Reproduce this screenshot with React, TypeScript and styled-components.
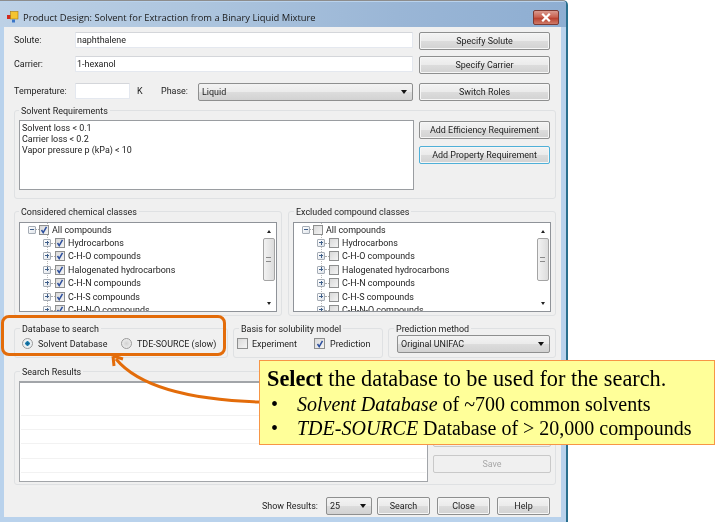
import React from "react";
import styled, { createGlobalStyle } from "styled-components";

const Global = createGlobalStyle`
  html, body { margin: 0; padding: 0; background: #fff; }
  #root { width: 715px; height: 522px; overflow: hidden; }
`;

const Page = styled.div`
  position: relative;
  width: 715px;
  height: 522px;
  overflow: hidden;
  background: #fff;
  font-family: Roboto, "Liberation Sans", Arial, sans-serif;
  font-size: 8.95px;
  color: #1c1c1c;
  filter: blur(0.35px);
`;

const Win = styled.div`
  width: 568px;
  height: 522px;
  box-sizing: border-box;
  padding-top: 1px;
  background: #b9d2ec;
  border-top: 1px solid #8d8d8d;
  border-right: 2px solid #2a6f8e;
  border-top-right-radius: 5px;
`;

const TitleBar = styled.div`
  height: 25px;
  box-sizing: border-box;
  display: flex;
  align-items: center;
  padding: 5px 7px 0 7px;
  background: linear-gradient(90deg, #bdd1e6 0%, #adc5de 35%, #9ab6d6 70%, #8eaed2 100%);
`;

const TitleText = styled.div`
  margin-left: 4px;
  font-family: "Open Sans", sans-serif;
  font-size: 9.4px;
  color: #1a1a1a;
  flex: 1;
`;

const CloseBtn = styled.div`
  width: 26px;
  height: 15px;
  box-sizing: border-box;
  border: 1px solid #7d3a33;
  border-radius: 2px;
  display: flex;
  align-items: center;
  justify-content: center;
  background: linear-gradient(180deg, #d99a8f 0%, #c9604f 48%, #b8402f 55%, #cf7a68 100%);
`;

const Client = styled.div`
  width: 557px;
  height: 490px;
  margin-left: 4px;
  box-sizing: border-box;
  padding: 5px 5px 0 10px;
  background: #f0f0f0;
  display: flex;
  flex-direction: column;
`;

const FieldRow = styled.div<{ $top: number }>`
  display: flex;
  align-items: flex-start;
  height: 18px;
  margin-top: ${(p) => p.$top}px;
`;

const FieldLabel = styled.div<{ $w: number; $pad?: number }>`
  width: ${(p) => p.$w}px;
  box-sizing: border-box;
  padding-left: ${(p) => p.$pad ?? 0}px;
  flex: none;
  line-height: 17px;
`;

const TextBox = styled.div<{ $w: number }>`
  width: ${(p) => p.$w}px;
  height: 16px;
  box-sizing: border-box;
  flex: none;
  padding-left: 1px;
  background: #fff;
  border: 1px solid #e4e8ef;
  border-top-color: #d4d6da;
  border-radius: 1px;
  line-height: 14px;
`;

const Btn = styled.div<{ $w?: number; $h?: number; $focus?: boolean; $off?: boolean }>`
  width: ${(p) => p.$w ?? 131}px;
  height: ${(p) => p.$h ?? 18}px;
  box-sizing: border-box;
  flex: none;
  display: flex;
  align-items: center;
  justify-content: center;
  padding-bottom: 1px;
  border: 1px solid ${(p) => (p.$focus ? "#4fb0d8" : p.$off ? "#c9c9c9" : "#8e8f8f")};
  border-radius: 2px;
  color: ${(p) => (p.$off ? "#a8a8a8" : "#1c1c1c")};
  background: ${(p) =>
    p.$off ? "#f0f0f0" : "linear-gradient(180deg, #f3f3f3 0%, #ebebeb 48%, #dcdcdc 52%, #d2d2d2 100%)"};
  box-shadow: inset 0 0 0 1px ${(p) => (p.$off ? "transparent" : "#f6f6f6")};
`;

const ButtonSlot = styled.div`
  margin-left: 6px;
`;

const Combo = styled.div<{ $w: number }>`
  width: ${(p) => p.$w}px;
  height: 18px;
  box-sizing: border-box;
  flex: none;
  display: flex;
  align-items: center;
  justify-content: space-between;
  padding: 0 5px 0 3px;
  border: 1px solid #8e8f8f;
  border-radius: 2px;
  background: linear-gradient(180deg, #f3f3f3 0%, #ebebeb 48%, #dcdcdc 52%, #d2d2d2 100%);
`;

const ComboArrow = styled.div`
  width: 0;
  height: 0;
  border-left: 3.5px solid transparent;
  border-right: 3.5px solid transparent;
  border-top: 4px solid #111;
`;

const Group = styled.div<{ $top?: number; $h: number; $w?: number; $left?: number }>`
  margin-top: ${(p) => p.$top ?? 0}px;
  margin-left: ${(p) => p.$left ?? 0}px;
  height: ${(p) => p.$h}px;
  width: ${(p) => (p.$w ? `${p.$w}px` : "auto")};
  box-sizing: border-box;
  flex: none;
  border: 1px solid #dfe1e3;
  border-radius: 3px;
`;

const Legend = styled.div<{ $left?: number }>`
  width: fit-content;
  height: 12px;
  margin: -6px 0 0 ${(p) => p.$left ?? 5}px;
  padding: 0 2px;
  line-height: 12px;
  background: #f0f0f0;
`;

const ReqBody = styled.div`
  display: flex;
  margin: 3px 0 0 4px;
`;

const ReqList = styled.div`
  width: 395px;
  height: 70px;
  box-sizing: border-box;
  flex: none;
  padding: 2px 2px;
  background: #fff;
  border: 1px solid #9a9da1;
  line-height: 11px;
`;

const ReqButtons = styled.div`
  margin-left: 5px;
  padding-top: 1px;
  display: flex;
  flex-direction: column;
  gap: 7px;
`;

const Split = styled.div<{ $top: number; $h: number }>`
  display: flex;
  margin-top: ${(p) => p.$top}px;
  height: ${(p) => p.$h}px;
`;

const TreeBox = styled.div`
  width: 258px;
  height: 90px;
  margin: 4px 0 0 4px;
  box-sizing: border-box;
  border: 1px solid #8f9399;
  background: #fff;
  display: flex;
  overflow: hidden;
`;

const TreeBody = styled.div`
  flex: 1;
  overflow: hidden;
  background-image: linear-gradient(#b8b8b8 50%, transparent 50%);
  background-size: 1px 2px;
  background-repeat: repeat-y;
  background-position: 27px 18px;
`;

const TreeRow = styled.div<{ $child?: boolean }>`
  height: 13.4px;
  display: flex;
  align-items: center;
  padding-left: ${(p) => (p.$child ? 23 : 8)}px;
  white-space: nowrap;
`;

const Expander = styled.div<{ $open?: boolean }>`
  position: relative;
  width: 8px;
  height: 8px;
  flex: none;
  box-sizing: border-box;
  border: 1px solid #a5acb5;
  border-radius: 1px;
  background: linear-gradient(135deg, #fff, #dfe4ea);
  &::before {
    content: "";
    position: absolute;
    left: 1px;
    top: 2px;
    width: 4px;
    height: 1px;
    background: #3f5f8a;
  }
  &::after {
    content: "";
    display: ${(p) => (p.$open ? "none" : "block")};
    position: absolute;
    left: 2.5px;
    top: 0.5px;
    width: 1px;
    height: 4px;
    background: #3f5f8a;
  }
`;

const Connector = styled.div<{ $w: number }>`
  width: ${(p) => p.$w}px;
  height: 0;
  flex: none;
  border-top: 1px dotted #a8a8a8;
`;

const Check = styled.div<{ $size?: number; $gap?: number }>`
  width: ${(p) => p.$size ?? 10}px;
  height: ${(p) => p.$size ?? 10}px;
  flex: none;
  box-sizing: border-box;
  border: 1px solid #8e8f8f;
  background: linear-gradient(135deg, #d9d9d9, #f4f4f4);
  display: flex;
  align-items: center;
  justify-content: center;
  margin-right: ${(p) => p.$gap ?? 3}px;
`;

const ScrollBar = styled.div`
  width: 15px;
  flex: none;
  display: flex;
  flex-direction: column;
  align-items: center;
  background: #fff;
`;

const ScrollUp = styled.div`
  width: 0;
  height: 0;
  margin-top: 7px;
  border-left: 2.5px solid transparent;
  border-right: 2.5px solid transparent;
  border-bottom: 3px solid #222;
`;

const ScrollDown = styled.div`
  width: 0;
  height: 0;
  margin-top: 21px;
  border-left: 2.5px solid transparent;
  border-right: 2.5px solid transparent;
  border-top: 3px solid #222;
`;

const ScrollThumb = styled.div`
  width: 12px;
  height: 43px;
  margin-top: 5px;
  box-sizing: border-box;
  border: 1px solid #a4a4a4;
  border-radius: 2px;
  background: linear-gradient(90deg, #f2f2f2, #dcdcdc);
  display: flex;
  flex-direction: column;
  justify-content: center;
  align-items: center;
  &::before {
    content: "";
    width: 5px;
    height: 5px;
    border-top: 1px solid #8a8a8a;
    border-bottom: 1px solid #8a8a8a;
    box-sizing: border-box;
  }
`;

const OptionsRow = styled.div`
  display: flex;
  align-items: center;
  margin-top: 3px;
`;

const RadioDot = styled.div<{ $on?: boolean; $left: number }>`
  width: 11px;
  height: 11px;
  flex: none;
  margin-left: ${(p) => p.$left}px;
  margin-right: 5px;
  box-sizing: border-box;
  border: 1px solid #9a9a9a;
  border-radius: 50%;
  background: ${(p) =>
    p.$on
      ? "radial-gradient(circle, #0b5f8f 0%, #1b7fb0 32%, #e8eef2 38%, #f2f2f2 100%)"
      : "radial-gradient(circle, #d2d2d2 0%, #e2e2e2 45%, #f5f5f5 100%)"};
`;

const OptText = styled.div<{ $w?: number }>`
  width: ${(p) => (p.$w ? `${p.$w}px` : "auto")};
  white-space: nowrap;
`;

const OptSpacer = styled.div`
  width: 3px;
  flex: none;
`;

const ComboSlot = styled.div`
  margin: 0 0 0 8px;
`;

const ResultsBody = styled.div`
  display: flex;
  margin: 3px 0 0 4px;
`;

const ResultsList = styled.div`
  width: 409px;
  height: 101px;
  box-sizing: border-box;
  flex: none;
  padding-top: 32px;
  background: #fff;
  border: 1px solid #a2a5a9;
  border-top-width: 2px;
`;

const ResultRow = styled.div`
  height: 14.2px;
  box-sizing: border-box;
  margin: 0 1px;
  border-top: 1px solid #f2f2f2;
`;

const SideButtons = styled.div`
  margin-left: 5px;
  padding-top: 48px;
  display: flex;
  flex-direction: column;
  gap: 8px;
`;

const Footer = styled.div`
  display: flex;
  align-items: center;
  margin-top: 12px;
  height: 18px;
  padding-left: 248px;
`;

const FooterLabel = styled.div`
  width: 64px;
  flex: none;
`;

const FooterBtn = styled.div<{ $gap: number }>`
  margin-left: ${(p) => p.$gap}px;
`;

const Highlight = styled.div`
  position: absolute;
  left: 1px;
  top: 315px;
  width: 225px;
  height: 41px;
  box-sizing: border-box;
  border: 3px solid #e36c0a;
  border-radius: 8px;
`;

const ArrowSvg = styled.svg`
  position: absolute;
  left: 100px;
  top: 350px;
`;

const Callout = styled.div`
  position: absolute;
  left: 259px;
  top: 360px;
  width: 456px;
  height: 85px;
  box-sizing: border-box;
  padding: 5px 0 0 7px;
  background: #ffff99;
  border: 1px solid #f79646;
  font-family: "Liberation Serif", "Times New Roman", serif;
  color: #000;
  white-space: nowrap;
`;

const CalloutTitle = styled.div`
  font-size: 22.3px;
  line-height: 25px;
  margin-bottom: 1px;
`;

const Bullet = styled.div`
  display: flex;
  font-size: 20px;
  line-height: 24px;
`;

const BulletDot = styled.div`
  width: 30px;
  flex: none;
  padding-left: 4px;
  box-sizing: border-box;
`;

const AppIcon = () => (
  <svg width="12" height="12" viewBox="0 0 12 12">
    <rect x="0" y="4" width="4" height="4" fill="#d22a1e" />
    <rect x="3.5" y="0.5" width="7.5" height="7.5" fill="#f4c430" stroke="#a87b10" strokeWidth="0.6" />
    <rect x="5" y="8.5" width="3" height="3" fill="#3a76c8" />
  </svg>
);

const CloseGlyph = () => (
  <svg width="10" height="9" viewBox="0 0 10 9">
    <path d="M2 1.5 L8 7.5 M8 1.5 L2 7.5" stroke="#fff" strokeWidth="2.2" strokeLinecap="square" />
  </svg>
);

const Tick = ({ size = 8 }: { size?: number }) => (
  <svg width={size} height={size} viewBox="0 0 8 8">
    <path d="M1.5 4 L3.2 6.6 L6.5 0.8" fill="none" stroke="#2c4f9e" strokeWidth="1.5" />
  </svg>
);

const names = [
  "Hydrocarbons",
  "C-H-O compounds",
  "Halogenated hydrocarbons",
  "C-H-N compounds",
  "C-H-S compounds",
  "C-H-N-O compounds",
];

const Tree = ({ on }: { on: boolean }) => (
  <TreeBox>
    <TreeBody>
      <TreeRow>
        <Expander $open />
        <Connector $w={3} />
        <Check>{on && <Tick />}</Check>
        All compounds
      </TreeRow>
      {names.map((n) => (
        <TreeRow key={n} $child>
          <Expander />
          <Connector $w={4} />
          <Check>{on && <Tick />}</Check>
          {n}
        </TreeRow>
      ))}
    </TreeBody>
    <ScrollBar>
      <ScrollUp />
      <ScrollThumb />
      <ScrollDown />
    </ScrollBar>
  </TreeBox>
);

export default function App() {
  return (
    <Page>
      <Global />
      <Win>
        <TitleBar>
          <AppIcon />
          <TitleText>Product Design: Solvent for Extraction from a Binary Liquid Mixture</TitleText>
          <CloseBtn>
            <CloseGlyph />
          </CloseBtn>
        </TitleBar>
        <Client>
          <FieldRow $top={0}>
            <FieldLabel $w={61}>Solute:</FieldLabel>
            <TextBox $w={338}>naphthalene</TextBox>
            <ButtonSlot>
              <Btn>Specify Solute</Btn>
            </ButtonSlot>
          </FieldRow>
          <FieldRow $top={6}>
            <FieldLabel $w={61}>Carrier:</FieldLabel>
            <TextBox $w={338}>1-hexanol</TextBox>
            <ButtonSlot>
              <Btn>Specify Carrier</Btn>
            </ButtonSlot>
          </FieldRow>
          <FieldRow $top={9}>
            <FieldLabel $w={61}>Temperature:</FieldLabel>
            <TextBox $w={55} />
            <FieldLabel $w={31} $pad={7}>K</FieldLabel>
            <FieldLabel $w={37}>Phase:</FieldLabel>
            <Combo $w={215}>
              Liquid
              <ComboArrow />
            </Combo>
            <ButtonSlot>
              <Btn>Switch Roles</Btn>
            </ButtonSlot>
          </FieldRow>
          <Group $top={9} $h={89}>
            <Legend $left={4}>Solvent Requirements</Legend>
            <ReqBody>
              <ReqList>
                Solvent loss &lt; 0.1
                <br />
                Carrier loss &lt; 0.2
                <br />
                Vapor pressure p (kPa) &lt; 10
              </ReqList>
              <ReqButtons>
                <Btn>Add Efficiency Requirement</Btn>
                <Btn $focus>Add Property Requirement</Btn>
              </ReqButtons>
            </ReqBody>
          </Group>
          <Split $top={12} $h={105}>
            <Group $h={105} $w={268}>
              <Legend $left={4}>Considered chemical classes</Legend>
              <Tree on />
            </Group>
            <Group $h={105} $w={268} $left={6}>
              <Legend>Excluded compound classes</Legend>
              <Tree on={false} />
            </Group>
          </Split>
          <Split $top={12} $h={30}>
            <Group $h={30} $w={214}>
              <Legend>Database to search</Legend>
              <OptionsRow>
                <RadioDot $on $left={7} />
                <OptText $w={80}>Solvent Database</OptText>
                <RadioDot $left={3} />
                <OptText>TDE-SOURCE (slow)</OptText>
              </OptionsRow>
            </Group>
            <Group $h={30} $w={150} $left={5}>
              <Legend>Basis for solubility model</Legend>
              <OptionsRow>
                <OptSpacer />
                <Check $size={11} $gap={4} />
                <OptText $w={62}>Experiment</OptText>
                <Check $size={11} $gap={5}>
                  <Tick />
                </Check>
                <OptText>Prediction</OptText>
              </OptionsRow>
            </Group>
            <Group $h={30} $w={168} $left={5}>
              <Legend>Prediction method</Legend>
              <ComboSlot>
                <Combo $w={153}>
                  Original UNIFAC
                  <ComboArrow />
                </Combo>
              </ComboSlot>
            </Group>
          </Split>
          <Group $top={13} $h={114}>
            <Legend>Search Results</Legend>
            <ResultsBody>
              <ResultsList>
                {[0, 1, 2, 3, 4, 5].map((i) => (
                  <ResultRow key={i} />
                ))}
              </ResultsList>
              <SideButtons>
                <Btn $w={118} $off />
                <Btn $w={118} $off>
                  Save
                </Btn>
              </SideButtons>
            </ResultsBody>
          </Group>
          <Footer>
            <FooterLabel>Show Results:</FooterLabel>
            <Combo $w={46}>
              25
              <ComboArrow />
            </Combo>
            <FooterBtn $gap={5}>
              <Btn $w={53}>Search</Btn>
            </FooterBtn>
            <FooterBtn $gap={7}>
              <Btn $w={53}>Close</Btn>
            </FooterBtn>
            <FooterBtn $gap={7}>
              <Btn $w={53}>Help</Btn>
            </FooterBtn>
          </Footer>
        </Client>
      </Win>
      <Highlight />
      <ArrowSvg width="170" height="60" viewBox="0 0 170 60">
        <path d="M160 52 C 95 50, 40 38, 16 9" fill="none" stroke="#e36c0a" strokeWidth="3" />
        <path d="M13 6 L14 16 M13 6 L23 9" fill="none" stroke="#e36c0a" strokeWidth="3" />
      </ArrowSvg>
      <Callout>
        <CalloutTitle>
          <b>Select</b> the database to be used for the search.
        </CalloutTitle>
        <Bullet>
          <BulletDot>•</BulletDot>
          <span>
            <i>Solvent Database</i> of ~700 common solvents
          </span>
        </Bullet>
        <Bullet>
          <BulletDot>•</BulletDot>
          <span>
            <i>TDE-SOURCE</i> Database of &gt; 20,000 compounds
          </span>
        </Bullet>
      </Callout>
    </Page>
  );
}
